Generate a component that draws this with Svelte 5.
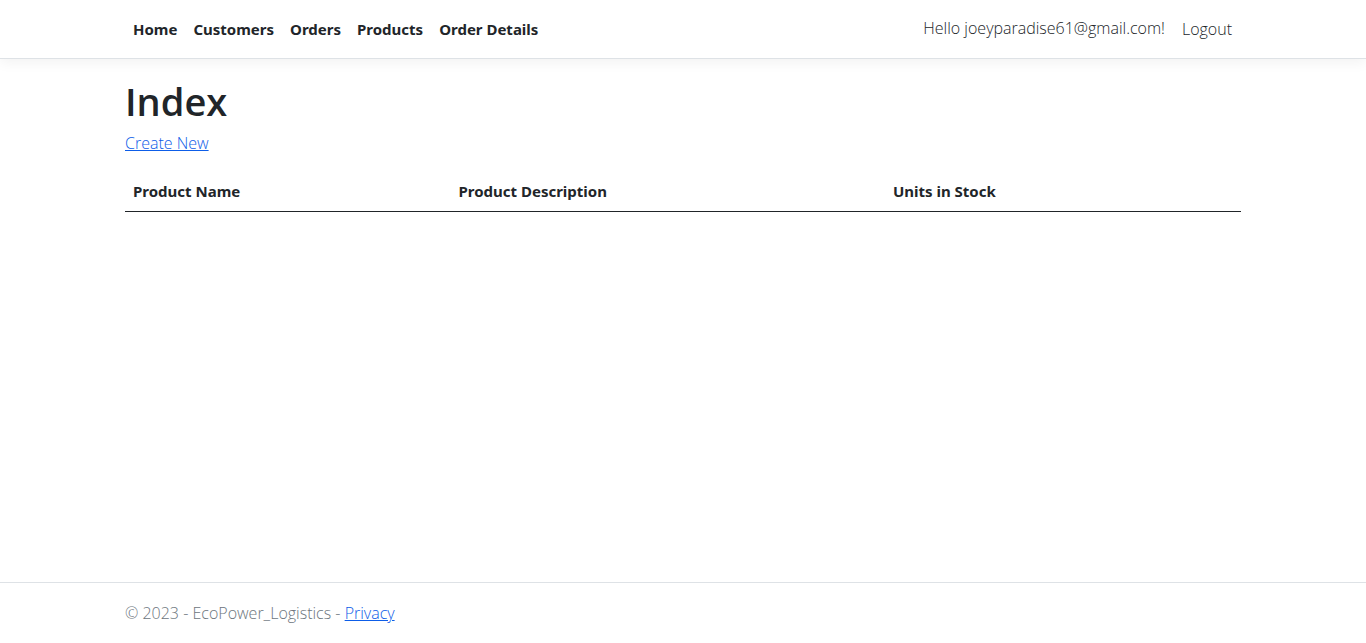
<script>
  const links = ['Home', 'Customers', 'Orders', 'Products', 'Order Details'];
  const columns = ['Product Name', 'Product Description', 'Units in Stock'];
</script>

<div class="page">
  <header>
    <nav class="container">
      <ul class="links">
        {#each links as link}
          <li><a href="#top">{link}</a></li>
        {/each}
      </ul>
      <ul class="account">
        <li><a href="#account">Hello joeyparadise61@gmail.com!</a></li>
        <li><button type="button">Logout</button></li>
      </ul>
    </nav>
  </header>

  <main class="container">
    <h1>Index</h1>
    <p><a href="#create">Create New</a></p>
    <table>
      <thead>
        <tr>
          {#each columns as column}
            <th scope="col">{column}</th>
          {/each}
          <td></td>
        </tr>
      </thead>
      <tbody></tbody>
    </table>
  </main>

  <footer>
    <div class="container">
      © 2023 - EcoPower_Logistics - <a href="#privacy">Privacy</a>
    </div>
  </footer>
</div>

<style>
  :global(body) {
    margin: 0;
    background: #fff;
  }
  .page {
    box-sizing: border-box;
    min-height: 100vh;
    display: flex;
    flex-direction: column;
    font: 330 16px/24px "Open Sans", "Noto Sans", sans-serif;
    color: #212529;
  }
  .container {
    box-sizing: border-box;
    width: 100%;
    max-width: 1140px;
    margin: 0 auto;
    padding: 0 12px;
  }
  header {
    border-bottom: 1px solid #dee2e6;
    box-shadow: 0 4px 12px rgba(0, 0, 0, 0.05);
    padding: 8px 0;
    margin-bottom: 16px;
  }
  nav {
    display: flex;
    justify-content: space-between;
    align-items: center;
  }
  ul {
    display: flex;
    list-style: none;
    margin: 0;
    padding: 0;
  }
  li a,
  li button {
    display: block;
    padding: 8px;
    background: none;
    font: inherit;
    color: #212529;
    text-decoration: none;
    line-height: 24px;
  }
  li button {
    border: 1px solid transparent;
  }
  .links a,
  th {
    font-family: "Noto Sans", sans-serif;
    font-weight: 700;
    font-size: 15px;
  }
  main {
    flex: 1;
  }
  h1 {
    margin: 0 0 4px;
    font-size: 38px;
    font-weight: 560;
    line-height: 52px;
  }
  p {
    margin: 0 0 16px;
  }
  p a,
  footer a {
    color: #0d5de8;
  }
  table {
    width: 100%;
    border-collapse: collapse;
  }
  th,
  td {
    padding: 8px;
    border-bottom: 1px solid #212529;
    text-align: left;
  }
  footer {
    border-top: 1px solid #dee2e6;
    color: #6c757d;
    line-height: 60px;
  }
</style>
